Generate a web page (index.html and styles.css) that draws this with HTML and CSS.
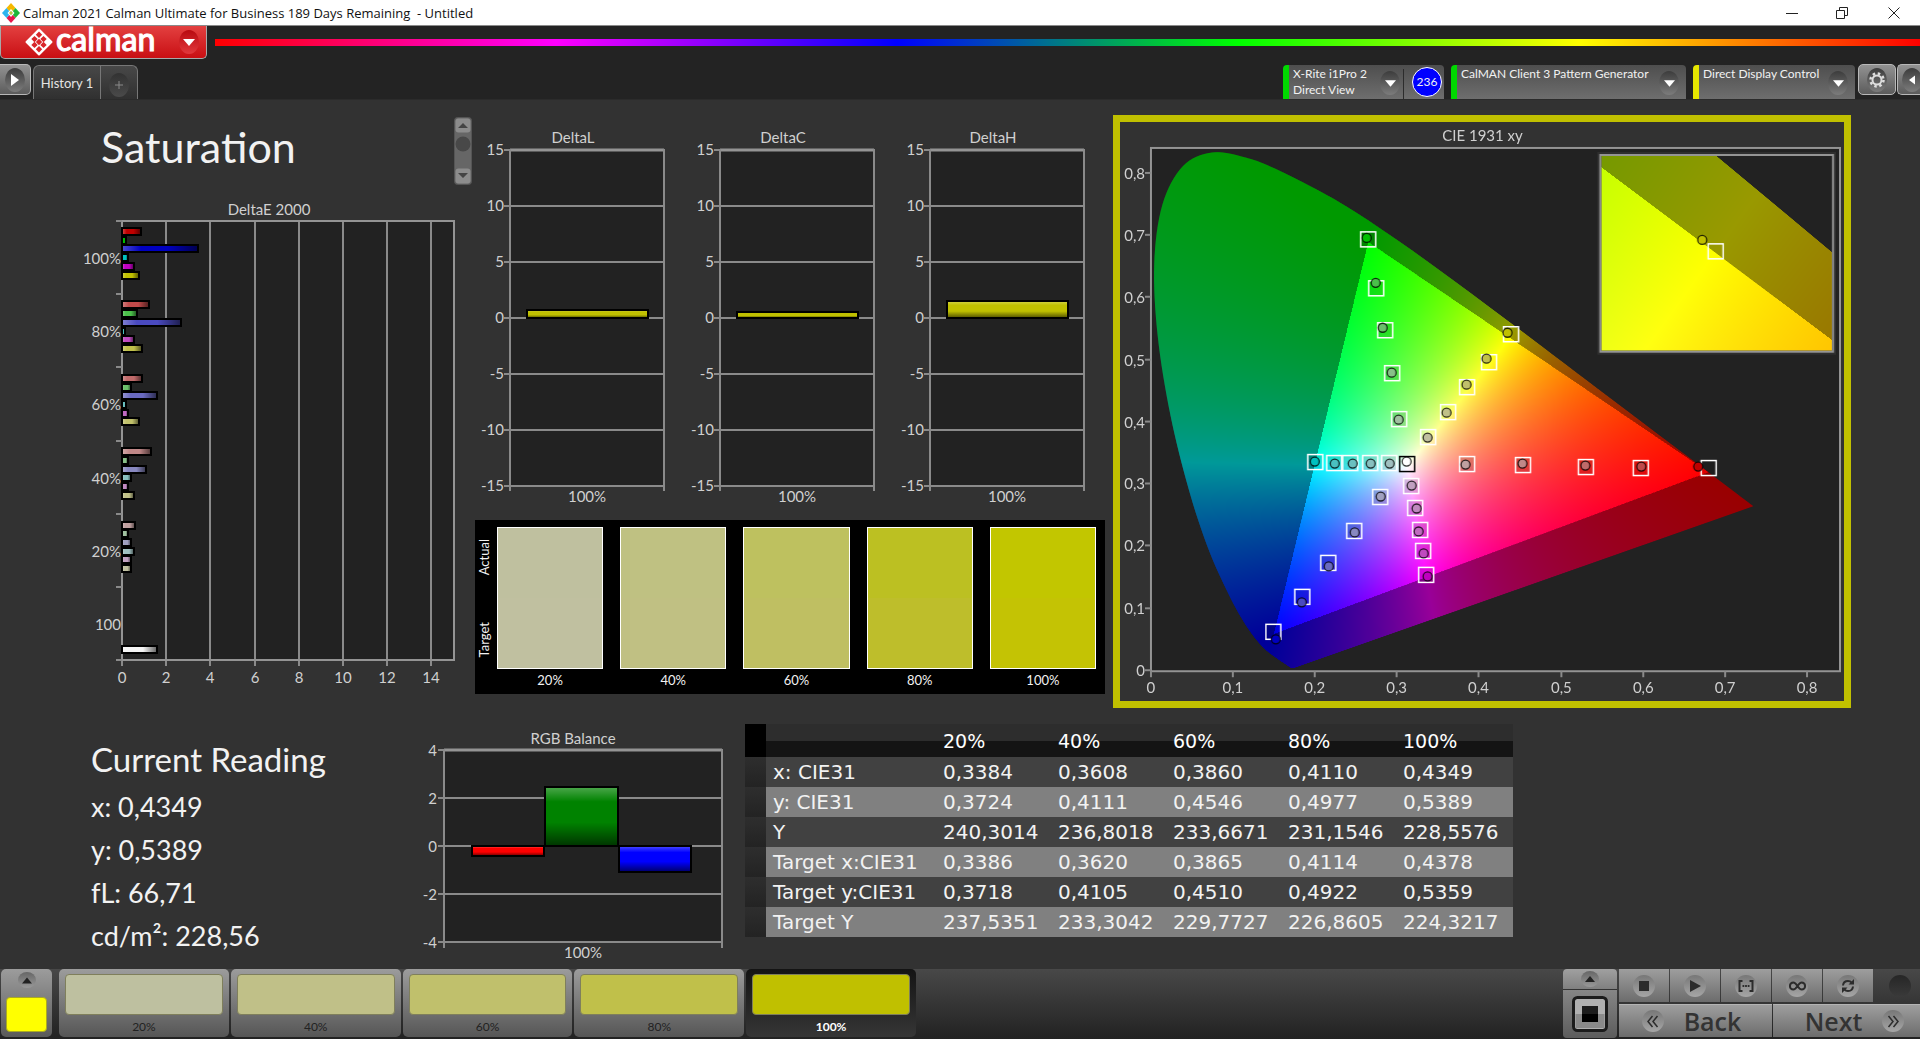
FILE: index.html
```html
<!DOCTYPE html>
<html lang="en">
<head>
<meta charset="utf-8">
<meta name="viewport" content="width=device-width, initial-scale=1">
<title>Calman 2021 - Untitled</title>
<link rel="stylesheet" href="styles.css">
</head>
<body>
<header class="titlebar">
  <svg class="titlebar-logo" width="18" height="20" viewBox="0 0 18 18" preserveAspectRatio="none" aria-hidden="true">
    <path d="M9 0l4.500 4.500L9 9 4.500 4.500z" fill="#f5b800"/><path d="M13.500 4.500L18 9l-4.500 4.500L9 9z" fill="#1fb83a"/>
    <path d="M9 9l4.500 4.500L9 18l-4.500-4.500z" fill="#e8174b"/><path d="M4.500 4.500L9 9l-4.500 4.500L0 9z" fill="#2db4ee"/>
    <path d="M9 5.500L12.500 9 9 12.500 5.500 9z" fill="#fff"/><path d="M9 7l2 2-2 2-2-2z" fill="#b9c94a"/>
  </svg>
  <span class="titlebar-text">Calman 2021 Calman Ultimate for Business 189 Days Remaining&nbsp; - Untitled</span>
  <div class="window-controls">
    <button aria-label="Minimize"><svg width="12" height="12" viewBox="0 0 12 12"><path d="M0 6.500h12" stroke="#222"/></svg></button>
    <button aria-label="Restore"><svg width="12" height="12" viewBox="0 0 12 12" fill="none" stroke="#222"><path d="M.5 3.500h8v8h-8zM3.500 3.500v-3h8v8h-3"/></svg></button>
    <button aria-label="Close"><svg width="12" height="12" viewBox="0 0 12 12"><path d="M.5.5l11 11M11.500.5l-11 11" stroke="#222"/></svg></button>
  </div>
</header>

<div class="ribbon">
  <div class="ribbon-top">
    <button class="brand" aria-label="calman menu">
      <svg width="28" height="28" viewBox="0 0 28 28" aria-hidden="true">
        <path d="M14 1.500L26.500 14 14 26.500 1.500 14z" fill="#fff" stroke="#fff" stroke-width="2" stroke-linejoin="round"/>
        <g fill="#d8262a"><path d="M14 3.500l3.200 3.200L14 9.900l-3.200-3.200z"/><path d="M9.500 7.900l3.200 3.200-3.200 3.200-3.200-3.200z"/><path d="M18.500 7.900l3.200 3.200-3.200 3.200-3.200-3.200z"/><path d="M14 10.800l3.200 3.200-3.200 3.200-3.200-3.200z"/><path d="M9.500 13.700l3.200 3.200-3.200 3.200-3.200-3.200z"/><path d="M18.500 13.700l3.200 3.200-3.200 3.200-3.200-3.200z"/><path d="M14 18.100l3.200 3.200-3.200 3.200-3.200-3.200z"/></g>
      </svg>
      <span class="brand-name">calman</span>
      <span class="round round-red"><svg width="12" height="7" viewBox="0 0 12 7"><path d="M0 0h12L6 7z" fill="#fff"/></svg></span>
    </button>
    <div class="spectrum"></div>
  </div>
  <div class="ribbon-tabs">
    <button class="side-button side-left" aria-label="Show panel"><span class="round"><svg width="8" height="12" viewBox="0 0 8 12"><path d="M0 0l8 6-8 6z" fill="#fff"/></svg></span></button>
    <nav class="tabs">
      <button class="tab">History 1</button>
      <button class="tab tab-add" aria-label="Add tab"><span class="round round-dim"><svg width="8" height="8" viewBox="0 0 8 8"><path d="M4 0v8M0 4h8" stroke="#8a8a8a"/></svg></span></button>
    </nav>
    <div class="devices">
      <button class="device device-meter">
        <span class="device-text">X-Rite i1Pro 2<br>Direct View</span>
        <span class="round"><svg width="11" height="7" viewBox="0 0 12 7"><path d="M0 0h12L6 7z" fill="#fff"/></svg></span>
        <span class="meter-badge">236</span>
      </button>
      <button class="device device-source">
        <span class="device-text">CalMAN Client 3 Pattern Generator</span>
        <span class="round"><svg width="11" height="7" viewBox="0 0 12 7"><path d="M0 0h12L6 7z" fill="#fff"/></svg></span>
      </button>
      <button class="device device-display">
        <span class="device-text">Direct Display Control</span>
        <span class="round"><svg width="11" height="7" viewBox="0 0 12 7"><path d="M0 0h12L6 7z" fill="#fff"/></svg></span>
      </button>
    </div>
    <button class="side-button" aria-label="Settings"><span class="round"><svg width="16" height="16" viewBox="0 0 16 16" fill="none" stroke="#ddd"><circle cx="8" cy="8" r="4.500" stroke-width="2"/><circle cx="8" cy="8" r="6.500" stroke-width="2.500" stroke-dasharray="2.500 2.600"/></svg></span></button>
    <button class="side-button side-right" aria-label="Hide panel"><span class="round"><svg width="6" height="12" viewBox="0 0 8 12"><path d="M8 0L0 6l8 6z" fill="#fff"/></svg></span></button>
  </div>
</div>

<main>
  <section class="row-top">
    <div class="panel-saturation">
      <div class="panel-head">
        <h1>Saturation</h1>
        <svg class="mini-scroll" width="18" height="68" viewBox="0 0 18 68" aria-hidden="true">
          <rect x=".5" y=".5" width="17" height="67" rx="3" fill="#666" stroke="#555"/>
          <rect x="1.500" y="1.500" width="15" height="14" rx="3" fill="#8c8c8c"/><rect x="1.500" y="51.500" width="15" height="15" rx="3" fill="#8c8c8c"/>
          <path d="M4 11l5-5 5 5zM4 56h10l-5 5z" fill="#444"/><circle cx="9" cy="27" r="7.500" fill="#484848"/>
        </svg>
      </div>
      <svg class="chart" id="deltaE" viewBox="0 0 475 500" role="img" aria-label="DeltaE 2000"></svg>
    </div>

    <div class="panel-delta">
      <div class="delta-charts">
        <svg class="chart" id="deltaL" viewBox="0 0 210 410"></svg>
        <svg class="chart" id="deltaC" viewBox="0 0 210 410"></svg>
        <svg class="chart" id="deltaH" viewBox="0 0 210 410"></svg>
      </div>
      <div class="compare">
        <div class="compare-sides"><span>Actual</span><span>Target</span></div>
        <figure><div class="patch patch-20"></div><figcaption>20%</figcaption></figure>
        <figure><div class="patch patch-40"></div><figcaption>40%</figcaption></figure>
        <figure><div class="patch patch-60"></div><figcaption>60%</figcaption></figure>
        <figure><div class="patch patch-80"></div><figcaption>80%</figcaption></figure>
        <figure><div class="patch patch-100"></div><figcaption>100%</figcaption></figure>
      </div>
    </div>

    <div class="panel-cie">
      <svg class="chart" id="cie" viewBox="0 0 725 580" role="img" aria-label="CIE 1931 xy">
        <rect x="31" y="26" width="690" height="524" fill="#222"/>
        <foreignObject x="31" y="26" width="690" height="524"><canvas id="gamut" width="1380" height="1048"></canvas></foreignObject>
        <g id="cieAxes"></g>
        <rect x="478" y="30" width="239" height="203" fill="#2e2e2e"/>
        <rect x="481" y="33" width="233" height="197" fill="#222"/>
        <foreignObject x="482" y="33" width="231" height="196"><canvas id="gamutInset" width="693" height="588"></canvas></foreignObject>
        <rect class="frame" x="481" y="33" width="233" height="197"/>
        <g id="cieMarks"></g>
      </svg>
    </div>
  </section>

  <section class="row-bottom">
    <div class="reading">
      <h2>Current Reading</h2>
      <p>x: 0,4349</p>
      <p>y: 0,5389</p>
      <p>fL: 66,71</p>
      <p>cd/m²: 228,56</p>
    </div>
    <svg class="chart" id="rgb" viewBox="0 0 345 240" role="img" aria-label="RGB Balance"></svg>
    <table>
      <thead><tr><td class="handle"></td><th></th><th>20%</th><th>40%</th><th>60%</th><th>80%</th><th>100%</th></tr></thead>
      <tbody>
        <tr><td class="handle"></td><th>x: CIE31</th><td>0,3384</td><td>0,3608</td><td>0,3860</td><td>0,4110</td><td>0,4349</td></tr>
        <tr><td class="handle"></td><th>y: CIE31</th><td>0,3724</td><td>0,4111</td><td>0,4546</td><td>0,4977</td><td>0,5389</td></tr>
        <tr><td class="handle"></td><th>Y</th><td>240,3014</td><td>236,8018</td><td>233,6671</td><td>231,1546</td><td>228,5576</td></tr>
        <tr><td class="handle"></td><th>Target x:CIE31</th><td>0,3386</td><td>0,3620</td><td>0,3865</td><td>0,4114</td><td>0,4378</td></tr>
        <tr><td class="handle"></td><th>Target y:CIE31</th><td>0,3718</td><td>0,4105</td><td>0,4510</td><td>0,4922</td><td>0,5359</td></tr>
        <tr><td class="handle"></td><th>Target Y</th><td>237,5351</td><td>233,3042</td><td>229,7727</td><td>226,8605</td><td>224,3217</td></tr>
      </tbody>
    </table>
  </section>
</main>

<footer class="dock">
  <button class="dock-current" aria-label="Current pattern"><span class="dot"><svg width="10" height="7" viewBox="0 0 12 7"><path d="M0 7h12L6 0z" fill="#222"/></svg></span><span class="dock-color"></span></button>
  <div class="levels">
    <button class="level"><span class="level-color level-20"></span>20%</button>
    <button class="level"><span class="level-color level-40"></span>40%</button>
    <button class="level"><span class="level-color level-60"></span>60%</button>
    <button class="level"><span class="level-color level-80"></span>80%</button>
    <button class="level level-active"><span class="level-color level-100"></span>100%</button>
  </div>
  <div class="pattern-toggle">
    <button class="toggle-up" aria-label="Expand"><span class="dot"><svg width="10" height="6" viewBox="0 0 12 7"><path d="M0 7h12L6 0z" fill="#222"/></svg></span></button>
    <button class="toggle-window" aria-label="Pattern window"><svg width="36" height="36" viewBox="0 0 36 36"><rect x="1.500" y="1.500" width="33" height="33" rx="4" fill="#b0b0b0" stroke="#1c1c1c" stroke-width="3"/><rect x="3.500" y="18" width="29" height="14" fill="#8a8a8a"/><rect x="10" y="10" width="16" height="16" fill="#000"/><path d="M10 10h16v8H10z" fill="#1c1c1c"/></svg></button>
  </div>
  <div class="transport">
    <div class="transport-row">
      <button aria-label="Stop"><span class="disc"><svg width="10" height="10"><rect width="10" height="10" fill="#2c2c2c"/></svg></span></button>
      <button aria-label="Play"><span class="disc"><svg width="12" height="12"><path d="M1 0l11 6-11 6z" fill="#2c2c2c"/></svg></span></button>
      <button aria-label="Read series"><span class="disc"><svg width="16" height="12" viewBox="0 0 16 12" fill="none" stroke="#2c2c2c" stroke-width="2"><path d="M4.500 1H1.500v10h3M11.500 1h3v10h-3"/><path d="M4.500 6h1.800M7.100 6h1.800M9.700 6h1.800" stroke-width="2"/></svg></span></button>
      <button aria-label="Continuous"><span class="disc"><svg width="17" height="10" viewBox="0 0 17 10" fill="none" stroke="#2c2c2c" stroke-width="2"><path d="M8.500 5C6.500 2 5.500 1.500 4.300 1.500a3.400 3.500 0 0 0 0 7C5.500 8.500 6.500 8 8.500 5S11.500 1.500 12.700 1.500a3.400 3.500 0 0 1 0 7C11.500 8.500 10.500 8 8.500 5z"/></svg></span></button>
      <button aria-label="Refresh"><span class="disc"><svg width="14" height="14" viewBox="0 0 14 14" fill="none" stroke="#2c2c2c" stroke-width="2"><path d="M2 6.500C2.300 3.500 4.500 2 7 2c1.500 0 2.800.6 3.700 1.600M12 7.500C11.700 10.500 9.500 12 7 12c-1.500 0-2.800-.6-3.700-1.600"/><path d="M13 0v5.500H7.500zM1 14V8.500h5.500z" fill="#2c2c2c" stroke="none"/></svg></span></button>
      <span class="transport-idle"><span class="disc disc-dark"></span></span>
    </div>
    <div class="transport-row">
      <button class="step step-back"><span class="disc"><svg width="13" height="13" viewBox="0 0 13 13" fill="none" stroke="#2c2c2c" stroke-width="1.500"><path d="M6.500 1L2 6.500 6.500 12M11.500 1L7 6.500l4.500 5.500"/></svg></span>Back</button>
      <button class="step step-next">Next<span class="disc"><svg width="13" height="13" viewBox="0 0 13 13" fill="none" stroke="#2c2c2c" stroke-width="1.500"><path d="M1.500 1L6 6.500 1.500 12M6.500 1L11 6.500 6.500 12"/></svg></span></button>
    </div>
  </div>
</footer>
<script src="charts.js"></script>
</body>
</html>
```
FILE: styles.css
```css
* { box-sizing: border-box; }
body { margin: 0; min-height: 100vh; display: flex; flex-direction: column; background: #323232; color: #f2f2f2; font-family: Lato, "Liberation Sans", sans-serif; font-size: 14px; overflow-x: hidden; }
button { font: inherit; color: inherit; border: 0; padding: 0; margin: 0; background: none; display: flex; align-items: center; justify-content: center; }
h1, h2, p, figure { margin: 0; font-weight: 400; }

/* window title */
.titlebar { height: 26px; flex: none; background: #fff; color: #111; display: flex; align-items: center; border-bottom: 1px solid #8a8a8a; padding-left: 2px; }
.titlebar-text { font-family: "Noto Sans", "Open Sans", sans-serif; font-size: 13px; margin-left: 3px; flex: 1; white-space: nowrap; }
.titlebar-text { font-family: "Open Sans", "Noto Sans", sans-serif; }
.window-controls { display: flex; }
.window-controls button { width: 52px; height: 24px; }
.window-controls button:first-child { width: 48px; }

/* ribbon */
.ribbon { height: 74px; flex: none; background: #232323; border-bottom: 1px solid #2b2b2b; display: flex; flex-direction: column; justify-content: space-between; }
.ribbon-top { display: flex; gap: 8px; }
.brand { width: 207px; height: 33px; flex: none; background: linear-gradient(#e34040, #c90f13); border: 1px solid #a8a8a8; border-top: 0; border-radius: 0 0 5px 5px; padding: 0 7px 0 24px; }
.brand-name { font-size: 32px; line-height: 30px; font-weight: 500; color: #fff; -webkit-text-stroke: 1px #fff; margin: 0 auto 7px 3px; }
.spectrum { flex: 1; height: 7px; margin-top: 13px; background: linear-gradient(90deg, #f00, #f0f 20%, #00f 40%, #0f0 60%, #ff0 80%, #f00); }
.round { width: 20px; height: 24px; flex: none; border-radius: 50%; display: flex; align-items: center; justify-content: center; background: linear-gradient(#3c3c3c, #7c7c7c); }
.round-red { background: linear-gradient(#b80a10, #e2383c); }
.round-dim { background: linear-gradient(#323232, #4a4a4a); margin-top: 4px; }
.ribbon-tabs { display: flex; align-items: flex-end; height: 35px; }
.side-button { width: 38px; height: 31px; margin-bottom: 3px; flex: none; border: 1px solid #b8b8b8; border-radius: 5px; background: linear-gradient(#929292, #5c5c5c); align-self: flex-start; }
.side-left { width: 31px; border-left: 0; border-radius: 0 5px 5px 0; }
.side-right { width: 23px; border-right: 0; border-radius: 5px 0 0 5px; margin-left: 1px; padding-left: 6px; }
.tabs { display: flex; height: 34px; margin: 0 auto 0 2px; border: 1px solid #777; border-bottom: 0; border-radius: 6px 6px 0 0; background: linear-gradient(#484848, #303030); }
.tab { width: 66px; font-size: 13px; color: #e4e4e4; white-space: nowrap; }
.tab-add { width: 37px; border-left: 1px solid #777; }
.devices { display: flex; gap: 7px; margin-right: 3px; }
.device { height: 34px; font-size: 12px; line-height: 16px; text-align: left; align-items: flex-start; justify-content: flex-start; border-left: 6px solid #00d800; border-radius: 4px 4px 0 0; background: linear-gradient(#4e4e4e, #6e6e6e); padding: 1px 7px 0 4px; }
.device .round { margin: 5px 0 0 auto; }
.device-text { white-space: nowrap; }
.device-meter { width: 161px; padding-right: 2px; }
.device-source { width: 235px; }
.device-display { width: 162px; border-color: #e6e600; }
.device-meter .round { margin: 5px 12px 0 auto; }
.meter-badge { width: 30px; height: 30px; flex: none; margin-top: 1px; border: 1px solid #fff; border-radius: 50%; background: #00f; line-height: 28px; text-align: center; position: relative; }
.device-meter { background: linear-gradient(#2c2c2c, #2c2c2c) 114px 4px / 1px 30px no-repeat, linear-gradient(#4e4e4e, #6e6e6e); }

/* workspace */
main { flex: 1; }
.row-top { display: grid; grid-template-columns: 475fr 630fr 815fr; align-items: start; }
.chart { display: block; width: 100%; height: auto; font-size: 15px; fill: #d0d0d0; }
.frame { fill: none; stroke: #949494; stroke-width: 2; }
.grid { stroke: #8a8a8a; stroke-width: 2; }
.thick { stroke: #949494; stroke-width: 3; }
.end { text-anchor: end; }
.mid { text-anchor: middle; }
.panel-head { display: flex; justify-content: space-between; height: 90px; padding: 17px 3px 0 101px; }
h1 { font-size: 43px; line-height: 60px; }
.delta-charts { display: grid; grid-template-columns: repeat(3, 1fr); }
.compare { background: #000; margin-top: 10px; height: 174px; padding: 7px 9px 0 0; display: grid; grid-template-columns: 22px 106fr repeat(4, 123fr); font-size: 13px; }
.compare figure { text-align: center; line-height: 22px; }
.compare figure + figure { padding-left: 17px; }
.compare-sides { display: flex; flex-direction: column; justify-content: space-between; align-items: center; height: 142px; padding: 12px 4px 12px 0; }
.compare-sides span { writing-mode: vertical-rl; transform: rotate(180deg); }
.patch { height: 142px; border: 1px solid #fff; }
.patch-20 { background: linear-gradient(#bfc09f 50%, #c0c0a0 50%); }
.patch-40 { background: linear-gradient(#bfc182 50%, #c0c083 50%); }
.patch-60 { background: linear-gradient(#bec15f 50%, #bfbf62 50%); }
.patch-80 { background: linear-gradient(#bcc022 50%, #bebe2b 50%); }
.patch-100 { background: linear-gradient(#c2c600 50%, #c4c304 50%); }
.panel-cie { border: 7px solid #c0c000; margin: 15px 69px 0 8px; }
canvas { display: block; width: 100%; height: 100%; }
.row-bottom { display: grid; grid-template-columns: 400fr 345fr 768fr 407fr; align-items: start; margin-top: 16px; }
.reading { padding: 9px 0 0 91px; font-size: 27px; line-height: 43px; white-space: nowrap; }
h2 { font-size: 33px; line-height: 52px; }
table { width: 100%; border-collapse: collapse; table-layout: fixed; font-family: "DejaVu Sans", sans-serif; font-size: 20px; }
thead { font-size: 19px; }
th, td { width: 115px; height: 30px; padding: 0; text-align: left; font-weight: 400; white-space: nowrap; line-height: 24px; }
th:nth-child(2) { width: 177px; padding-left: 7px; }
th:last-child { width: auto; }
thead tr { background: linear-gradient(#2d2d2d 50%, #141414 50%); }
thead th { height: 33px; color: #fff; }
tbody tr { background: #414141; }
tbody tr:nth-child(even) { background: #808080; }
td.handle { width: 21px; background: linear-gradient(#2e2e2e, #232323); }
thead td.handle { background: #000; }

/* dock */
.dock { flex: none; height: 70px; display: flex; align-items: flex-start; background: linear-gradient(#484848, #222); }
.dock-current { width: 51px; height: 68px; margin: 0 7px 0 1px; flex-direction: column; justify-content: space-between; padding: 3px 0 5px; border-radius: 5px; background: linear-gradient(#9c9c9c, #5a5a5a); }
.dot { width: 18px; height: 16px; border-radius: 50%; display: flex; align-items: center; justify-content: center; background: linear-gradient(#666, #999); }
.dock-color { width: 41px; height: 35px; border-radius: 4px; background: #ff0; border: 1px solid #aaaa22; }
.levels { display: grid; grid-template-columns: repeat(5, 1fr); gap: 2px; flex: 0 1 857px; }
.level { height: 68px; flex-direction: column; justify-content: flex-start; padding: 5px 6px 0; border-radius: 5px; background: linear-gradient(#9c9c9c, #565656); color: #222; font-size: 12px; line-height: 24px; }
.level-active { background: linear-gradient(#141414, #363636); color: #fff; font-weight: 700; }
.level-color { align-self: stretch; flex: none; height: 41px; border: 1px solid #7f7f5c; border-radius: 4px; }
.level-20 { background: #bec0a0; }
.level-40 { background: #c0c088; }
.level-60 { background: #c0c06c; }
.level-80 { background: #c0c04a; }
.level-100 { background: #c0c000; }
.pattern-toggle { width: 54px; margin: 0 2px 0 auto; border-radius: 4px; overflow: hidden; display: flex; flex-direction: column; gap: 1px; background: #333; }
.toggle-up { height: 20px; background: linear-gradient(#a0a0a0, #808080); }
.toggle-window { height: 48px; background: linear-gradient(#868686, #5c5c5c); }
.transport { width: 301px; display: flex; flex-direction: column; gap: 2px; }
.transport-row { display: flex; gap: 1px; }
.transport-row button { flex: 1; height: 33px; background: linear-gradient(#9e9e9e, #6c6c6c); }
.transport-idle { width: 46px; height: 33px; display: flex; align-items: center; justify-content: center; padding-left: 6px; }
.disc { width: 22px; height: 22px; flex: none; border-radius: 50%; display: flex; align-items: center; justify-content: center; background: linear-gradient(#777, #a6a6a6); }
.disc-dark { background: linear-gradient(#262626, #3a3a3a); }
.transport-row .step { font-family: "Open Sans", "Noto Sans", sans-serif; font-weight: 600; font-size: 25px; line-height: 30px; color: #333; gap: 20px; border-top: 1px solid #b4b4b4; }
.transport-row .step-back { flex: none; width: 153px; padding-right: 8px; }
.transport-row .step-next { padding: 0 4px 0 20px; }
```
FILE: charts.js
```js
var NS = 'http://www.w3.org/2000/svg';

function add(parent, name, attrs, text) {
  var el = document.createElementNS(NS, name);
  for (var key in attrs) el.setAttribute(key, attrs[key]);
  if (text !== undefined) el.textContent = text;
  parent.appendChild(el);
  return el;
}

function line(svg, x1, y1, x2, y2, cls) {
  add(svg, 'line', { x1: x1, y1: y1, x2: x2, y2: y2, 'class': cls || 'grid' });
}

function label(svg, x, y, text, cls) {
  add(svg, 'text', { x: x, y: y, 'class': cls || 'mid' }, text);
}

// Shared glossy overlay; direction is 'h' (left to right) or 'v' (top to bottom).
function gloss(svg, id, dir) {
  var g = add(add(svg, 'defs', {}), 'linearGradient', dir === 'h' ? { id: id } : { id: id, x2: 0, y2: 1 });
  [[0, '#fff', 0.3], [0.25, '#fff', 0], [0.6, '#000', 0], [1, '#000', 0.6]].forEach(function (s) {
    add(g, 'stop', { offset: s[0], 'stop-color': s[1], 'stop-opacity': s[2] });
  });
}

function bar(svg, x, y, w, h, fill, glossId) {
  add(svg, 'rect', { x: x, y: y, width: w, height: h, fill: fill });
  add(svg, 'rect', { x: x, y: y, width: w, height: h, fill: 'url(#' + glossId + ')', stroke: '#000', 'stroke-width': 2 });
}

// Colour of a hue at a saturation step; the mask tells which channels are at full level.
var LOW = { 100: 0, 80: 74, 60: 106, 40: 136, 20: 160 };
var HUES = { R: [1, 0, 0], G: [0, 1, 0], B: [0, 0, 1], C: [0, 1, 1], M: [1, 0, 1], Y: [1, 1, 0] };
function shade(hue, level) {
  return 'rgb(' + HUES[hue].map(function (on) { return on ? 192 : LOW[level]; }).join(',') + ')';
}

function drawDeltaE() {
  var svg = document.getElementById('deltaE');
  gloss(svg, 'glossE', 'h');
  add(svg, 'rect', { x: 122, y: 31, width: 332, height: 439, fill: '#222' });
  label(svg, 269, 25, 'DeltaE 2000');
  for (var v = 0; v <= 14; v += 2) {
    var x = Math.round(122 + v * 22.1);
    line(svg, x, 31, x, 476);
    label(svg, x, 493, String(v));
  }
  add(svg, 'rect', { x: 122, y: 31, width: 332, height: 439, 'class': 'frame' });
  ['100%', '80%', '60%', '40%', '20%', '100'].forEach(function (t, i) {
    var y = 31 + Math.round(i * 73.2);
    line(svg, 116, y, 122, y);
    label(svg, 121, y + 43, t, 'end');
  });
  line(svg, 116, 470, 122, 470);
  var ends = {
    100: [19, 4, 76, 6, 12, 17], 80: [27, 15, 59, 3, 12, 20], 60: [20, 9, 35, 4, 6, 17],
    40: [29, 6, 24, 9, 6, 12], 20: [13, 6, 9, 12, 9, 9]
  };
  [100, 80, 60, 40, 20].forEach(function (level, i) {
    ends[level].forEach(function (w, k) {
      bar(svg, 122, 38 + Math.round(i * 73.4 + k * 8.7), w, 7, shade('RGBCMY'[k], level), 'glossE');
    });
  });
  bar(svg, 122, 456, 35, 7, '#f4f4f4', 'glossE');
}

function drawDelta(id, name, top) {
  var svg = document.getElementById(id);
  gloss(svg, 'gloss' + id, 'v');
  add(svg, 'rect', { x: 35, y: 50, width: 154, height: 336, fill: '#222' });
  label(svg, 98, 43, name);
  for (var i = 0; i <= 6; i++) {
    line(svg, 29, 50 + i * 56, 189, 50 + i * 56);
    label(svg, 29, 55 + i * 56, String(15 - i * 5), 'end');
  }
  line(svg, 35, 50, 189, 50, 'thick');
  line(svg, 35, 49, 35, 391);
  line(svg, 189, 49, 189, 391);
  bar(svg, 52, top, 121, 218 - top, '#c0c000', 'gloss' + id);
  label(svg, 112, 402, '100%');
}

function drawRgb() {
  var svg = document.getElementById('rgb');
  gloss(svg, 'glossRgb', 'v');
  add(svg, 'rect', { x: 44, y: 26, width: 278, height: 192, fill: '#222' });
  label(svg, 173, 20, 'RGB Balance');
  for (var i = 0; i <= 4; i++) {
    line(svg, 38, 26 + i * 48, 322, 26 + i * 48);
    label(svg, 37, 32 + i * 48, String(4 - i * 2), 'end');
  }
  line(svg, 44, 26, 322, 26, 'thick');
  line(svg, 44, 25, 44, 224);
  line(svg, 322, 25, 322, 224);
  bar(svg, 72, 122, 72, 10, '#f00', 'glossRgb');
  bar(svg, 145, 63, 73, 59, '#008200', 'glossRgb');
  bar(svg, 219, 122, 72, 26, '#00f', 'glossRgb');
  label(svg, 183, 234, '100%');
}

// Spectral locus, CIE 1931 2 degree observer.
var LOCUS = [
  [.1741, .0050], [.1714, .0051], [.1689, .0069], [.1644, .0109], [.1566, .0177], [.1440, .0297],
  [.1355, .0399], [.1241, .0578], [.1096, .0868], [.0913, .1327], [.0687, .2007], [.0454, .2950],
  [.0235, .4127], [.0082, .5384], [.0039, .6548], [.0139, .7502], [.0389, .8120], [.0743, .8338],
  [.1142, .8262], [.1547, .8059], [.2296, .7543], [.3016, .6923], [.3731, .6245], [.4441, .5547],
  [.5125, .4866], [.5752, .4242], [.6270, .3725], [.6658, .3340], [.6915, .3083], [.7190, .2809],
  [.7347, .2653]
];

function drawGamut(id, x0, y0, x1, y1) {
  var canvas = document.getElementById(id), ctx = canvas.getContext('2d');
  var w = canvas.width, h = canvas.height, img = ctx.createImageData(w, h), d = img.data;
  for (var j = 0, p = 0; j < h; j++) {
    var y = y1 - (j + .5) / h * (y1 - y0);
    for (var i = 0; i < w; i++, p += 4) {
      var x = x0 + (i + .5) / w * (x1 - x0), z = 1 - x - y;
      var r = 2.4935 * x - .9314 * y - .4027 * z;
      var g = -.8295 * x + 1.7627 * y + .0236 * z;
      var b = .0358 * x - .0762 * y + .9569 * z;
      var scale = (r >= 0 && g >= 0 && b >= 0 ? 255 : 153) / Math.max(r, g, b);
      d[p] = Math.max(0, r * scale);
      d[p + 1] = Math.max(0, g * scale);
      d[p + 2] = Math.max(0, b * scale);
      d[p + 3] = 255;
    }
  }
  ctx.putImageData(img, 0, 0);

  // Keep only what lies within the locus, smoothed through its points.
  var pts = LOCUS.map(function (c) { return [(c[0] - x0) / (x1 - x0) * w, (y1 - c[1]) / (y1 - y0) * h]; });
  ctx.globalCompositeOperation = 'destination-in';
  ctx.beginPath();
  ctx.moveTo(pts[0][0], pts[0][1]);
  for (var k = 0; k < pts.length - 1; k++) {
    var a = pts[Math.max(0, k - 1)], s = pts[k], e = pts[k + 1], n = pts[Math.min(pts.length - 1, k + 2)];
    ctx.bezierCurveTo(s[0] + (e[0] - a[0]) / 6, s[1] + (e[1] - a[1]) / 6,
      e[0] - (n[0] - s[0]) / 6, e[1] - (n[1] - s[1]) / 6, e[0], e[1]);
  }
  ctx.closePath();
  ctx.fill();
}

function square(svg, x, y, stroke, fill) {
  add(svg, 'rect', { x: x - 7, y: y - 8, width: 15, height: 15, fill: fill || 'none', stroke: stroke || '#fff', 'stroke-width': 1.5 });
}
function dot(svg, x, y, fill) {
  add(svg, 'ellipse', { cx: x, cy: y, rx: 4.5, ry: 4.5, fill: fill, stroke: '#000', 'stroke-opacity': .8, 'stroke-width': 1.3 });
}

function drawCie() {
  var axes = document.getElementById('cieAxes'), marks = document.getElementById('cieMarks');
  label(axes, 363, 19, 'CIE 1931 xy');
  add(axes, 'rect', { x: 31, y: 26, width: 690, height: 524, 'class': 'frame' });
  for (var i = 0; i <= 8; i++) {
    var t = i ? '0,' + i : '0', x = Math.round(31 + i * 82.1), y = Math.round(549 - i * 62.3);
    line(axes, x, 550, x, 556);
    line(axes, 25, y, 31, y);
    label(axes, x, 572, t);
    label(axes, 25, y + 6, t, 'end');
  }
  drawGamut('gamut', 0, 0, .8404, .8411);
  drawGamut('gamutInset', .4133, .5107, .4630, .5609);

  // Target x, y then measured x, y for each saturation step, in chart units.
  var series = {
    G: { 100: [248, 118, 247, 116], 80: [256, 167, 256, 161], 60: [265, 209, 263, 206], 40: [272, 252, 272, 251], 20: [279, 298, 279, 298] },
    Y: { 20: [308, 316, 308, 316], 40: [328, 291, 327, 291], 60: [347, 266, 347, 263], 80: [369, 241, 367, 237], 100: [391, 213, 388, 211] },
    C: { 100: [195, 341, 195, 340], 80: [214, 342, 215, 342], 60: [230, 342, 233, 342], 40: [250, 342, 251, 342], 20: [269, 342, 270, 342] },
    R: { 20: [347, 343, 346, 343], 40: [403, 344, 403, 342], 60: [466, 346, 466, 344], 80: [521, 347, 522, 345], 100: [589, 347, 579, 345] },
    M: { 20: [291, 365, 292, 364], 40: [295, 387, 297, 387], 60: [300, 409, 299, 410], 80: [303, 430, 304, 432], 100: [306, 454, 308, 455] },
    B: { 20: [260, 376, 261, 375], 40: [234, 410, 235, 411], 60: [208, 442, 209, 445], 80: [182, 476, 182, 481], 100: [153, 511, 156, 518] }
  };
  Object.keys(series).forEach(function (hue) {
    Object.keys(series[hue]).forEach(function (level) {
      var m = series[hue][level];
      square(marks, m[0], m[1], '#fff', hue === 'Y' ? 'none' : 'rgba(0,0,0,.12)');
      dot(marks, m[2], m[3], shade(hue, level));
    });
  });
  square(marks, 287, 343, '#000');
  dot(marks, 287, 340, '#fff');
  square(marks, 596, 130);
  dot(marks, 583, 118, '#c0c000');
}

drawDeltaE();
drawDelta('deltaL', 'DeltaL', 210);
drawDelta('deltaC', 'DeltaC', 212);
drawDelta('deltaH', 'DeltaH', 201);
drawRgb();
drawCie();
```
